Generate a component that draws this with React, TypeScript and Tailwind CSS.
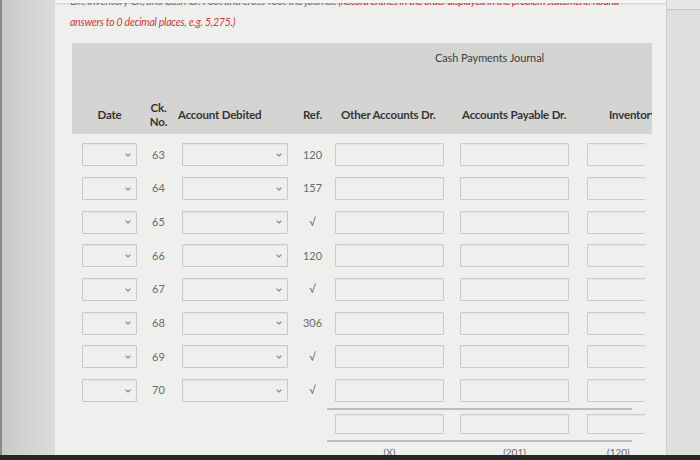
import React from "react";
import { ChevronDown } from "lucide-react";

type Row = { ck: number; ref: string };

const ROWS: Row[] = [
  { ck: 63, ref: "120" },
  { ck: 64, ref: "157" },
  { ck: 65, ref: "√" },
  { ck: 66, ref: "120" },
  { ck: 67, ref: "√" },
  { ck: 68, ref: "306" },
  { ck: 69, ref: "√" },
  { ck: 70, ref: "√" },
];

const SelectBox: React.FC<{ className: string }> = ({ className }) => (
  <div
    className={`h-[23px] border border-[#c9c9c8] bg-[#efefee] rounded-[1px] flex items-center justify-end pr-[4px] shadow-[inset_0_1px_1px_rgba(0,0,0,0.04)] ${className}`}
  >
    <ChevronDown size={8} strokeWidth={3.5} color="#8c8c8c" />
  </div>
);

const InputBox: React.FC<{ className: string; h?: string }> = ({ className, h = "h-[23px]" }) => (
  <div
    className={`${h} border border-[#cbcbca] bg-[#efefee] rounded-[1px] shrink-0 shadow-[inset_0_1px_1px_rgba(0,0,0,0.04)] ${className}`}
  />
);

/* columns: date 73 | ck 27 | account 126 | ref 29 | other 125 | ap 126 | inventory */
const JournalRow: React.FC<{ r: Row }> = ({ r }) => (
  <div className="h-[33.7px] flex items-center text-[11px] text-[#6b6b6b]">
    <div className="w-[73px] shrink-0 pl-[10px]">
      <SelectBox className="w-[55px]" />
    </div>
    <div className="w-[27px] shrink-0 text-center">{r.ck}</div>
    <div className="w-[126px] shrink-0 pl-[10px]">
      <SelectBox className="w-[106px]" />
    </div>
    <div className="w-[29px] shrink-0 text-center">{r.ref}</div>
    <div className="w-[125px] shrink-0 pl-[8px]">
      <InputBox className="w-[109px]" />
    </div>
    <div className="w-[126px] shrink-0 pl-[8px]">
      <InputBox className="w-[109px]" />
    </div>
    <div className="shrink-0 pl-[9px]">
      <InputBox className="w-[100px]" />
    </div>
  </div>
);

export default function App() {
  return (
    <div className="w-[700px] h-[460px] overflow-hidden flex flex-col bg-[#d6d6d4] font-['Lato',_sans-serif]">
      <div className="h-[455px] flex overflow-hidden">
        {/* left gutter */}
        <div className="w-[55px] shrink-0 bg-gradient-to-r from-[#c9c9c7] to-[#dcdcda] border-l-2 border-[#8a8a8a]" />

        {/* page panel */}
        <div className="w-[612px] shrink-0 bg-[#efefee] relative overflow-hidden border-r border-[#cfcfcd]">
          <div className="absolute top-0 left-0 right-0 h-[3px] bg-[#f4f4f3] shadow-[0_1px_2px_rgba(0,0,0,0.15)]" />

          <div className="pl-[15px]">
            <div className="h-[9px] overflow-hidden">
              <div className="-mt-[6px] text-[10.5px] leading-[14px] whitespace-nowrap tracking-[-0.35px]">
                <span className="text-[#7a7a7a]">
                  Dr., Inventory Cr., and Cash Cr. Foot and cross-foot the journal.{" "}
                </span>
                <span className="text-[#c23b36] italic">
                  (Record entries in the order displayed in the problem statement. Round
                </span>
              </div>
            </div>
            <div className="mt-[5px] h-[16px] leading-[16px] text-[10.5px] italic text-[#c23b36] tracking-[-0.25px] whitespace-nowrap">
              answers to 0 decimal places, e.g. 5,275.)
            </div>
          </div>

          {/* header band */}
          <div className="mt-[13px] ml-[17px] w-[580px] h-[91px] bg-[#d4d4d3] flex flex-col">
            <div className="pt-[9px] h-[21px] leading-[12px] text-[11px] text-[#3f3f3f]">
              <div className="pl-[255px] w-[580px] text-center tracking-[-0.1px]">Cash Payments Journal</div>
            </div>
            <div className="mt-[36px] h-[30px] flex items-center text-[11.5px] font-bold text-[#363636] tracking-[-0.2px] whitespace-nowrap">
              <div className="w-[73px] shrink-0 pl-[10px] text-center">
                <div className="w-[55px]">Date</div>
              </div>
              <div className="w-[27px] shrink-0 text-center leading-[14px]">
                Ck.
                <br />
                No.
              </div>
              <div className="w-[126px] shrink-0 pl-[6px]">Account Debited</div>
              <div className="w-[29px] shrink-0 text-center">Ref.</div>
              <div className="w-[125px] shrink-0 pl-[14px]">Other Accounts Dr.</div>
              <div className="w-[126px] shrink-0 pl-[10px]">Accounts Payable Dr.</div>
              <div className="pl-[31px] w-[80px] overflow-hidden">Inventory</div>
            </div>
          </div>

          {/* rows */}
          <div className="mt-[4px] ml-[17px] w-[573px] overflow-hidden">
            {ROWS.map((r) => (
              <JournalRow key={r.ck} r={r} />
            ))}

            {/* totals */}
            <div className="pl-[255px]">
              <div className="w-[305px] h-[2px] bg-[#bdbdbc]" />
              <div className="mt-[4px] h-[20px] flex">
                <div className="w-[125px] shrink-0 pl-[8px]">
                  <InputBox className="w-[109px]" h="h-[20px]" />
                </div>
                <div className="w-[126px] shrink-0 pl-[8px]">
                  <InputBox className="w-[109px]" h="h-[20px]" />
                </div>
                <div className="shrink-0 pl-[9px]">
                  <InputBox className="w-[100px]" h="h-[20px]" />
                </div>
              </div>
              <div className="mt-[6px] w-[305px] h-[2px] bg-[#bdbdbc]" />
              <div className="mt-[4px] flex text-[10px] text-[#6b6b6b] leading-[12px]">
                <div className="w-[125px] shrink-0 pl-[8px] text-center">
                  <div className="w-[109px]">(X)</div>
                </div>
                <div className="w-[126px] shrink-0 pl-[8px] text-center">
                  <div className="w-[109px]">(201)</div>
                </div>
                <div className="shrink-0 pl-[29px]">(120)</div>
              </div>
            </div>
          </div>
        </div>

        {/* right gutter */}
        <div className="flex-1 bg-[#dededc] relative">
          <div className="h-[10px] border-b border-[#c4c4c2] bg-[#e6e6e4]" />
        </div>
      </div>
      <div className="h-[5px] bg-[#262626]" />
    </div>
  );
}
